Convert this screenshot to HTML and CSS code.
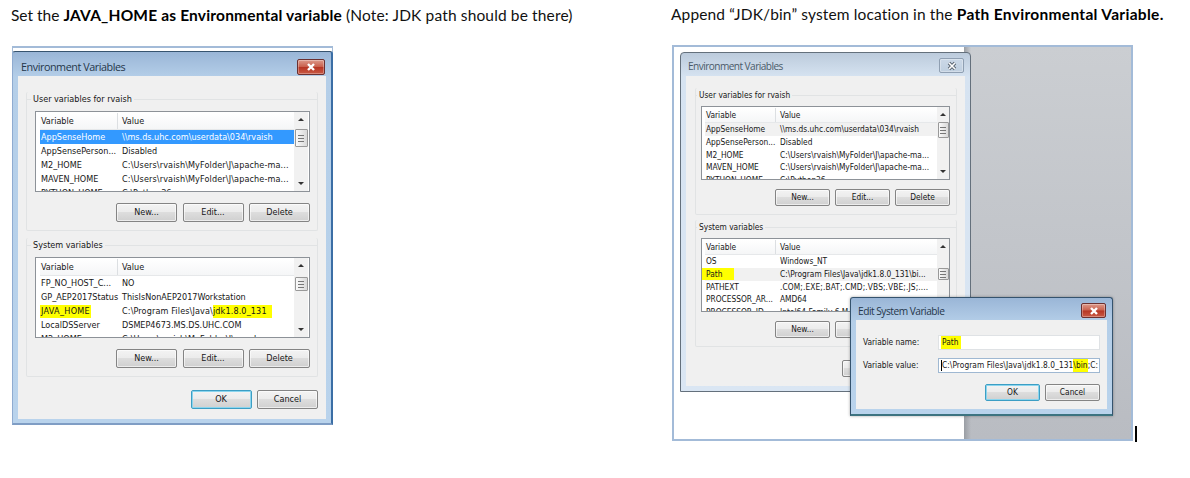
FILE: index.html
```
<!DOCTYPE html>
<html lang="en">
<head>
<meta charset="utf-8">
<title>Environment variables</title>
<link rel="stylesheet" href="styles.css">
</head>
<body>
<main class="page">
  <section class="step">
    <h2 class="heading"><span class="plain">Set the </span><b>JAVA_HOME as Environmental variable</b> (Note: JDK path should be there)</h2>
    <div class="shot shot-left">
      <div class="win win-main">
        <header class="bar"><span class="title">Environment Variables</span><span class="close"><svg viewBox="0 0 12 10"><path d="M3 2l6 6M9 2l-6 6"/></svg></span></header>
        <div class="client">
          <fieldset class="group">
            <legend>User variables for rvaish</legend>
            <div class="list">
              <div class="rows">
                <div class="row head"><span>Variable</span><span>Value</span></div>
                <div class="row selected"><span>AppSenseHome</span><span>\\ms.ds.uhc.com\userdata\034\rvaish</span></div>
                <div class="row"><span>AppSensePerson...</span><span>Disabled</span></div>
                <div class="row"><span>M2_HOME</span><span class="wide">C:\Users\rvaish\MyFolder\J\apache-ma...</span></div>
                <div class="row"><span>MAVEN_HOME</span><span class="wide">C:\Users\rvaish\MyFolder\J\apache-ma...</span></div>
                <div class="row"><span>PYTHON_HOME</span><span>C:\Python36</span></div>
              </div>
              <div class="scroll"><i class="up"></i><i class="thumb"></i><i class="down"></i></div>
            </div>
            <div class="buttons"><span class="btn">New...</span><span class="btn">Edit...</span><span class="btn">Delete</span></div>
          </fieldset>
          <fieldset class="group">
            <legend>System variables</legend>
            <div class="list">
              <div class="rows">
                <div class="row head"><span>Variable</span><span>Value</span></div>
                <div class="row"><span>FP_NO_HOST_C...</span><span>NO</span></div>
                <div class="row"><span>GP_AEP2017Status</span><span>ThisIsNonAEP2017Workstation</span></div>
                <div class="row"><span><mark class="mark-name">JAVA_HOME</mark></span><span class="wide">C:\Program Files\Java\<mark class="mark-jdk">jdk1.8.0_131</mark></span></div>
                <div class="row"><span>LocalDSServer</span><span>DSMEP4673.MS.DS.UHC.COM</span></div>
                <div class="row"><span>M2_HOME</span><span class="wide">C:\Users\rvaish\MyFolder\J\apache-</span></div>
              </div>
              <div class="scroll low"><i class="up"></i><i class="thumb"></i><i class="down"></i></div>
            </div>
            <div class="buttons"><span class="btn">New...</span><span class="btn">Edit...</span><span class="btn">Delete</span></div>
          </fieldset>
          <div class="buttons final"><span class="btn default">OK</span><span class="btn">Cancel</span></div>
        </div>
      </div>
    </div>
  </section>
  <section class="step step-right">
    <h2 class="heading">Append “JDK/bin” system location in the <b>Path Environmental Variable.</b></h2>
    <div class="shot-line">
      <div class="shot shot-right">
        <div class="desk"></div>
        <div class="win win-back">
          <header class="bar"><span class="title">Environment Variables</span><span class="close"><svg viewBox="0 0 12 10"><path class="outline" d="M3 2l6 6M9 2l-6 6"/><path d="M3 2l6 6M9 2l-6 6"/></svg></span></header>
          <div class="client">
            <fieldset class="group">
              <legend>User variables for rvaish</legend>
              <div class="list">
                <div class="rows">
                  <div class="row head"><span>Variable</span><span>Value</span></div>
                  <div class="row dim"><span>AppSenseHome</span><span>\\ms.ds.uhc.com\userdata\034\rvaish</span></div>
                  <div class="row"><span>AppSensePerson...</span><span>Disabled</span></div>
                  <div class="row"><span>M2_HOME</span><span>C:\Users\rvaish\MyFolder\J\apache-ma...</span></div>
                  <div class="row"><span>MAVEN_HOME</span><span>C:\Users\rvaish\MyFolder\J\apache-ma...</span></div>
                  <div class="row"><span>PYTHON_HOME</span><span>C:\Python36</span></div>
                </div>
                <div class="scroll"><i class="up"></i><i class="thumb"></i><i class="down"></i></div>
              </div>
              <div class="buttons"><span class="btn">New...</span><span class="btn">Edit...</span><span class="btn">Delete</span></div>
            </fieldset>
            <fieldset class="group">
              <legend>System variables</legend>
              <div class="list">
                <div class="rows">
                  <div class="row head"><span>Variable</span><span>Value</span></div>
                  <div class="row"><span>OS</span><span>Windows_NT</span></div>
                  <div class="row dim"><span><mark class="mark-path">Path</mark></span><span>C:\Program Files\Java\jdk1.8.0_131\bi...</span></div>
                  <div class="row"><span>PATHEXT</span><span class="wide">.COM;.EXE;.BAT;.CMD;.VBS;.VBE;.JS;....</span></div>
                  <div class="row"><span>PROCESSOR_AR...</span><span>AMD64</span></div>
                  <div class="row"><span>PROCESSOR_ID...</span><span>Intel64 Family 6 M</span></div>
                </div>
                <div class="scroll low"><i class="up"></i><i class="thumb"></i><i class="down"></i></div>
              </div>
              <div class="buttons"><span class="btn">New...</span><span class="btn"></span></div>
            </fieldset>
            <div class="buttons final"><span class="btn"></span><span class="btn"></span></div>
          </div>
        </div>
        <div class="win win-edit">
          <header class="bar"><span class="title">Edit System Variable</span><span class="close"><svg viewBox="0 0 12 10"><path d="M3 2l6 6M9 2l-6 6"/></svg></span></header>
          <div class="client">
            <div class="field"><span class="label">Variable name:</span><span class="input"><mark class="mark-field">Path</mark></span></div>
            <div class="field"><span class="label">Variable value:</span><span class="input focus"><i class="beam"></i>C:\Program Files\Java\jdk1.8.0_131<mark class="mark-bin">\bin</mark>;C:</span></div>
            <div class="buttons"><span class="btn default">OK</span><span class="btn">Cancel</span></div>
          </div>
        </div>
      </div>
      <i class="caret"></i>
    </div>
  </section>
</main>
</body>
</html>
```
FILE: styles.css
```
* { box-sizing: border-box; }
body { margin: 0; background: #fff; }
.page { display: grid; grid-template-columns: 660px 530px; width: 1190px; height: 478px; overflow: hidden; }
.step { padding-left: 12px; }
.heading { margin: 0 0 0 -1px; height: 46px; padding-top: 5px; font: 400 15.5px/20px Lato, sans-serif; letter-spacing: .14px; color: #111; white-space: pre; }
.heading .plain { letter-spacing: 0; }
.step-right .heading { height: 45px; padding-top: 4px; }
.heading b { font-weight: 700; color: #000; letter-spacing: .18px; }
.step-right b { letter-spacing: .31px; }
.shot { position: relative; flex: none; border: 2px solid #a3bbd8; background: #fff; }
.shot-left { width: 321px; height: 379px; border-width: 2px 0 0; padding-top: 3px; box-shadow: inset 1px 0 #a3bbd8, inset -1px 0 #a3bbd8; }
.shot-right { width: 461px; height: 396px; }
.shot-line { display: flex; align-items: flex-end; gap: 2px; }
.caret { width: 2px; height: 16px; background: #000; margin-bottom: -1px; }
.desk { position: absolute; left: 290px; top: 0; width: 167px; height: 392px; background: linear-gradient(90deg, #9a9ea4, rgba(190,193,198,0) 7px), linear-gradient(#cbced2, #b9bcc2); }

.win { display: flex; flex-direction: column; font: 9px/14px "DejaVu Sans Condensed", "DejaVu Sans", sans-serif; font-stretch: condensed; color: #161616; }
.win-main { height: 374px; border: 1px solid #8fabd0; border-top-color: #37546f; border-right: 2px solid #3b6ea5; border-bottom: 2px solid #7f9dc4; border-radius: 3px 3px 0 0; padding: 0 5px 4px; background: linear-gradient(#9ab6d7, #b4cee8 25px, #b9d3ec); }
.bar { display: flex; flex: none; height: 24px; justify-content: space-between; align-items: flex-start; }
.title { font: 10.8px/16px "Open Sans", sans-serif; letter-spacing: -.45px; color: #25364a; padding: 7px 0 0 3px; white-space: nowrap; }
.close { display: flex; align-items: center; justify-content: center; width: 28px; height: 16px; margin: 7px 1px 0 0; border: 1px solid #6b3030; border-radius: 2px; background: linear-gradient(#dd9a8b, #c9604d 48%, #b63523 52%, #c95a45); box-shadow: inset 0 0 0 1px rgba(255,255,255,.3); }
.close svg { width: 12px; height: 10px; overflow: visible; }
.close path { fill: none; stroke: #fff; stroke-width: 2.4; }
.client { flex: 1; background: #f0f0f0; padding: 16px 8px 0; min-height: 0; }
.group { display: block; position: relative; margin: 0 0 7px; min-width: 0; height: 139px; padding: 0 8px; border: 1px solid #e1e3e4; border-radius: 2px; border-top: 0; }
.group::before { content: ""; position: absolute; left: 0; right: 0; top: 7px; border-top: 1px solid #e1e3e4; }
.group legend { position: relative; float: left; width: auto; padding: 0 2px; margin-left: -4px; background: #f0f0f0; height: 19px; white-space: nowrap; }
.list { clear: both; display: flex; width: 275px; height: 81px; border: 1px solid #8d9298; background: #fff; overflow: hidden; }
.rows { width: 258px; padding: 1px 0 0 4px; }
.row { display: grid; grid-template-columns: 81px 1fr; height: 14px; line-height: 14px; padding-left: 1px; white-space: pre; }
.wide { letter-spacing: .13px; }
.head { height: 17px; line-height: 17px; border-bottom: 1px solid #e6e8ea; background: linear-gradient(90deg, transparent 77px, #dcdfe2 77px, #dcdfe2 78px, transparent 78px), linear-gradient(#fff, #f5f6f7); }
.selected { background: #3399ff; color: #fff; }
.dim { background: #f1f1f1; }
mark { color: inherit; background: #ffff00; }
.scroll { display: flex; flex-direction: column; align-items: center; width: 14px; background: #f1f1f1; }
.up { margin-top: 6px; border: 3px solid transparent; border-top: 0; border-bottom: 3px solid #333; }
.thumb { width: 13px; height: 18px; margin-top: 8px; border: 1px solid #999; border-radius: 1px; background: repeating-linear-gradient(#777 0 1px, transparent 1px 3px) center / 6px 7px no-repeat, linear-gradient(90deg, #fafafa, #d9d9d9); }
.low .thumb { height: 14px; margin-top: 10px; }
.down { margin-top: auto; margin-bottom: 6px; border: 3px solid transparent; border-bottom: 0; border-top: 3px solid #333; }
.buttons { display: flex; justify-content: flex-end; gap: 5.5px; }
.group .buttons { margin-top: 11px; width: 275px; }
.btn { width: 61px; height: 19px; flex: none; line-height: 17px; text-align: center; white-space: nowrap; border: 1px solid #848484; border-radius: 2px; background: linear-gradient(#f3f3f3, #ebebeb 49%, #dddddd 50%, #d0d0d0); box-shadow: inset 0 0 0 1px rgba(255,255,255,.6); }
.default { border-color: #3c9ec4; box-shadow: inset 0 0 0 1px #8bd5ee; }
.final { margin-top: 13px; }

.mark-name { padding: 1px 1px 2px 1px; margin-left: -1px; letter-spacing: .3px; }
.mark-jdk { padding: 1px 5px 2px 0; }

.win-back { position: absolute; left: 6px; top: 5px; width: 291px; height: 340px; border: 1px solid #64707c; border-radius: 4px 4px 0 0; padding: 0 5px 5px; background: linear-gradient(#bccbdc, #d6e3f1 24px, #dae6f3); font-size: 8.3px; line-height: 13px; }
.win-back .bar { height: 23px; }
.win-back .title { font-size: 10.1px; letter-spacing: -.55px; color: #4b5a69; padding: 5px 0 0 2px; }
.win-back .close { width: 25px; height: 15px; margin: 5px 1px 0 0; border-color: #8f9fb2; background: linear-gradient(#cbd8e7, #bfcfe0); }
.win-back .close path { stroke-width: 1.6; }
.win-back .close .outline { stroke: #58636f; stroke-width: 3.4; }
.win-back .client { padding: 12px 8px 0 9px; }
.win-back .group { height: 127px; margin-bottom: 5px; padding-left: 5px; }
.win-back .group legend { height: 18px; line-height: 15px; margin-left: -4px; }
.win-back .list { width: 249px; height: 74px; }
.win-back .rows { width: 235px; padding-left: 3px; }
.win-back .row { grid-template-columns: 74px 1fr; height: 12.75px; line-height: 12.75px; }
.win-back .head { height: 15px; line-height: 15px; background: linear-gradient(90deg, transparent 70px, #dcdfe2 70px, #dcdfe2 71px, transparent 71px), linear-gradient(#fff, #f5f6f7); }
.win-back .scroll { width: 12px; }
.win-back .wide { letter-spacing: .11px; }
.win-back .thumb { width: 11px; height: 16px; margin-top: 6px; }
.win-back .low .thumb { height: 12px; margin-top: 20px; }
.win-back .buttons { gap: 5px; }
.win-back .group .buttons { width: 249px; margin-top: 9px; }
.win-back .group:nth-child(2) .buttons { width: 189px; }
.win-back .btn, .win-edit .btn { width: 55px; height: 17px; line-height: 15px; }
.mark-path { padding: 1px 12px 1px 5px; margin-left: -5px; }

.win-edit { position: absolute; left: 176px; top: 250px; width: 263px; height: 119px; border: 1px solid #35536e; border-bottom: 2px solid #3d7481; border-radius: 3px 3px 0 0; padding: 0 5px 5px; background: linear-gradient(#9ab6d7, #b4cee8 24px, #b9d3ec); box-shadow: 0 0 3px rgba(0,0,0,.35); font-size: 8.3px; line-height: 13px; }
.win-edit .bar { height: 22px; }
.win-edit .title { font-size: 10.2px; letter-spacing: -.5px; padding: 5px 0 0 2px; }
.win-edit .close { width: 25px; height: 15px; margin: 5px 1px 0 0; }
.win-edit .client { padding: 15px 7px 0; }
.field { display: flex; align-items: center; height: 15px; margin-bottom: 8px; white-space: nowrap; }
.label { width: 75px; }
.input { display: block; position: relative; width: 162px; height: 15px; line-height: 13px; padding-left: 3px; border: 1px solid #dfe2e5; background: #fff; overflow: hidden; white-space: pre; }
.focus { border-color: #9fb8d2; letter-spacing: .06px; }
.beam { position: absolute; left: 2px; top: 1px; width: 1px; height: 11px; background: #000; }
.mark-field { padding: 1px 3px 2px 1px; margin-left: -1px; }
.mark-bin { padding: 2px 0; }
.win-edit .buttons { gap: 5px; margin-top: 11px; }
```
